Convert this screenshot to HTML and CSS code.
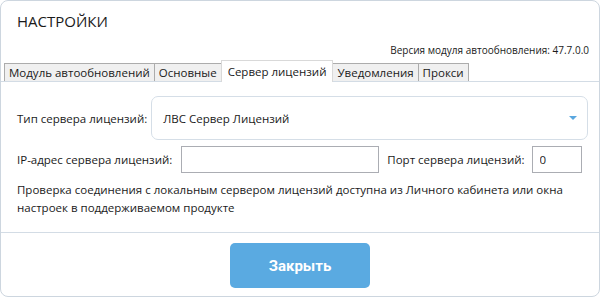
FILE: index.html
```html
<!DOCTYPE html>
<html lang="ru">
<head>
    <meta charset="UTF-8">
    <title>Настройки</title>
    <link rel="stylesheet" href="styles.css">
</head>
<body>
<div class="window">
    <div class="header">
        <h1>НАСТРОЙКИ</h1>
        <div class="version">Версия модуля автообновления: 47.7.0.0</div>
    </div>
    <div class="tabs">
        <div class="tab">Модуль автообновлений</div>
        <div class="tab">Основные</div>
        <div class="tab active">Сервер лицензий</div>
        <div class="tab">Уведомления</div>
        <div class="tab">Прокси</div>
    </div>
    <div class="panel">
        <div class="row type-row">
            <span class="label">Тип сервера лицензий:</span>
            <div class="combo">
                <span>ЛВС Сервер Лицензий</span>
                <svg class="arrow" width="8" height="4" viewBox="0 0 8 4"><path d="M0 0h8L4 4z" fill="#5aa7df"/></svg>
            </div>
        </div>
        <div class="row addr-row">
            <span class="label">IP-адрес сервера лицензий:</span>
            <input class="field ip" type="text" value="">
            <span class="label port-label">Порт сервера лицензий:</span>
            <input class="field port" type="text" value="0">
        </div>
        <p class="note">Проверка соединения с локальным сервером лицензий доступна из Личного кабинета или окна настроек в поддерживаемом продукте</p>
    </div>
    <div class="footer">
        <button class="close">Закрыть</button>
    </div>
</div>
</body>
</html>
```

FILE: styles.css
```css
body {
    margin: 0;
    background: #fff;
    font-family: 'Open Sans', 'Noto Sans', sans-serif;
    color: #1a1a1a;
}

.window {
    width: 598px;
    height: 295px;
    border: 1px solid #cdd6df;
    border-radius: 8px;
    display: flex;
    flex-direction: column;
    overflow: hidden;
}

.header {
    padding: 9px 10px 0 16px;
}

h1 {
    margin: 0;
    font-size: 15px;
    font-weight: normal;
    line-height: 22px;
}

.version {
    margin-top: 11px;
    text-align: right;
    font-size: 10px;
    line-height: 14px;
}

.tabs {
    display: flex;
    align-items: flex-end;
    padding-left: 3px;
    margin-top: 3px;
    border-bottom: 1px solid #d3dce5;
    height: 21px;
}

.tab {
    height: 17px;
    line-height: 17px;
    padding: 0 4px;
    font-size: 11.5px;
    background: #f0f0f0;
    border: 1px solid #acacac;
    border-bottom: none;
    margin-right: -1px;
    white-space: nowrap;
}

.tab.active {
    height: 21px;
    line-height: 21px;
    padding: 0 6px;
    background: #fff;
    border-color: #d9d9d9;
    margin-bottom: -1px;
    position: relative;
    z-index: 1;
}

.panel {
    flex: 1;
    padding: 14px 11px 0 16px;
    border-bottom: 1px solid #d3dce5;
    font-size: 11.5px;
}

.row {
    display: flex;
    align-items: center;
}

.label {
    white-space: nowrap;
}

.combo {
    flex: 1;
    margin-left: 4px;
    height: 42px;
    border: 1px solid #d5dee7;
    border-radius: 7px;
    display: flex;
    align-items: center;
    justify-content: space-between;
    padding: 0 11px;
}

.arrow {
    margin-right: -1px;
}

.addr-row {
    margin-top: 6px;
}

.field {
    border: 1px solid #abadb3;
    box-sizing: border-box;
    height: 27px;
    font: inherit;
    padding: 0 7px;
    margin: 0;
    color: #1a1a1a;
    outline: none;
}

.ip {
    width: 198px;
    margin-left: 9px;
}

.port-label {
    margin-left: 8px;
}

.port {
    width: 50px;
    margin-left: 7px;
}

.note {
    margin: 8px 0 0;
    line-height: 18px;
}

.footer {
    height: 63px;
    display: flex;
    justify-content: center;
    padding-top: 10px;
    box-sizing: border-box;
}

.close {
    width: 140px;
    height: 45px;
    border: none;
    border-radius: 5px;
    background: #5aaae1;
    color: #fff;
    font-family: 'Roboto', sans-serif;
    font-weight: bold;
    font-size: 15px;
}
```
